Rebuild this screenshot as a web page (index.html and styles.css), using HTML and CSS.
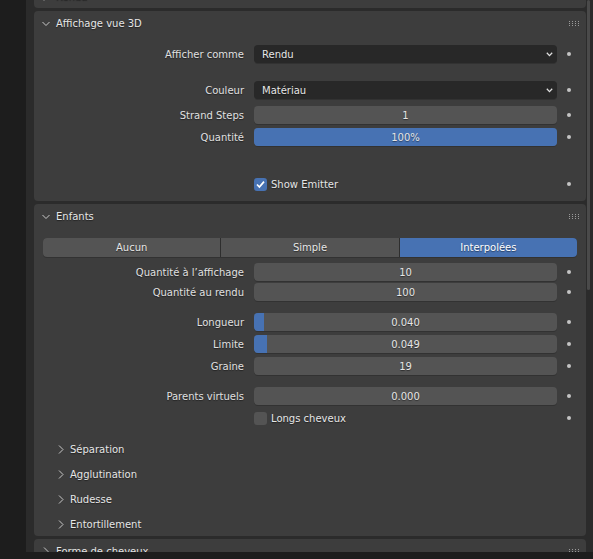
FILE: index.html
```html
<!DOCTYPE html>
<html lang="fr">

<head>
  <meta charset="UTF-8">
  <meta name="viewport" content="width=device-width, initial-scale=1.0">
  <title>Particules</title>
  <link rel="stylesheet" href="styles.css">
</head>

<body>
  <div class="editor">
    <div class="nav-bar"></div>
    <div class="region">
      <div class="stack">

        <!-- panneau replie -->
        <div class="panel">
          <div class="panel-head">
            <span class="arrow"><svg width="6" height="9" viewBox="0 0 6 9"><path d="M1 0.5 L5 4.5 L1 8.5" fill="none" stroke="#c8c8c8" stroke-width="1"/></svg></span>
            <span>Rendu</span>
          </div>
        </div>

        <!-- affichage vue 3D -->
        <div class="panel">
          <div class="panel-head">
            <span class="arrow"><svg width="8" height="6" viewBox="0 0 8 6"><path d="M0.5 1 L4 4.5 L7.5 1" fill="none" stroke="#c8c8c8" stroke-width="1"/></svg></span>
            <span>Affichage vue 3D</span>
            <span class="grip"><svg width="10" height="5" viewBox="0 0 10 5"><g fill="#9a9a9a"><rect x="0" y="0" width="1" height="1"/><rect x="0" y="2" width="1" height="1"/><rect x="0" y="4" width="1" height="1"/><rect x="3" y="0" width="1" height="1"/><rect x="3" y="2" width="1" height="1"/><rect x="3" y="4" width="1" height="1"/><rect x="6" y="0" width="1" height="1"/><rect x="6" y="2" width="1" height="1"/><rect x="6" y="4" width="1" height="1"/><rect x="9" y="0" width="1" height="1"/><rect x="9" y="2" width="1" height="1"/><rect x="9" y="4" width="1" height="1"/></g></svg></span>
          </div>
          <div class="panel-body">
            <div class="row">
              <span class="label">Afficher comme</span>
              <div class="field menu"><span>Rendu</span><svg width="7" height="5" viewBox="0 0 7 5"><path d="M0.8 0.8 L3.5 3.6 L6.2 0.8" fill="none" stroke="#e0e0e0" stroke-width="1.3"/></svg></div>
              <span class="dot"></span>
            </div>
            <div class="row after-sep">
              <span class="label">Couleur</span>
              <div class="field menu"><span>Matériau</span><svg width="7" height="5" viewBox="0 0 7 5"><path d="M0.8 0.8 L3.5 3.6 L6.2 0.8" fill="none" stroke="#e0e0e0" stroke-width="1.3"/></svg></div>
              <span class="dot"></span>
            </div>
            <div class="row after-menu">
              <span class="label">Strand Steps</span>
              <div class="field"><span class="value">1</span></div>
              <span class="dot"></span>
            </div>
            <div class="row">
              <span class="label">Quantité</span>
              <div class="field"><div class="fill" style="width: 100%"></div><span class="value">100%</span></div>
              <span class="dot"></span>
            </div>
            <div class="row far">
              <span class="label"></span>
              <label class="check"><span class="box on"><svg width="13" height="13" viewBox="0 0 13 13"><path d="M3 6.5 L5.4 9 L10 3.6" fill="none" stroke="#fff" stroke-width="1.7"/></svg></span>Show Emitter</label>
              <span class="dot"></span>
            </div>
          </div>
        </div>

        <!-- enfants -->
        <div class="panel">
          <div class="panel-head">
            <span class="arrow"><svg width="8" height="6" viewBox="0 0 8 6"><path d="M0.5 1 L4 4.5 L7.5 1" fill="none" stroke="#c8c8c8" stroke-width="1"/></svg></span>
            <span>Enfants</span>
            <span class="grip"><svg width="10" height="5" viewBox="0 0 10 5"><g fill="#9a9a9a"><rect x="0" y="0" width="1" height="1"/><rect x="0" y="2" width="1" height="1"/><rect x="0" y="4" width="1" height="1"/><rect x="3" y="0" width="1" height="1"/><rect x="3" y="2" width="1" height="1"/><rect x="3" y="4" width="1" height="1"/><rect x="6" y="0" width="1" height="1"/><rect x="6" y="2" width="1" height="1"/><rect x="6" y="4" width="1" height="1"/><rect x="9" y="0" width="1" height="1"/><rect x="9" y="2" width="1" height="1"/><rect x="9" y="4" width="1" height="1"/></g></svg></span>
          </div>
          <div class="panel-body bottomless">
            <div class="tabs">
              <span class="tab">Aucun</span>
              <span class="tab">Simple</span>
              <span class="tab active">Interpolées</span>
            </div>
            <div class="row after-tabs">
              <span class="label">Quantité à l’affichage</span>
              <div class="field"><span class="value">10</span></div>
              <span class="dot"></span>
            </div>
            <div class="row tight">
              <span class="label">Quantité au rendu</span>
              <div class="field"><span class="value">100</span></div>
              <span class="dot"></span>
            </div>
            <div class="row spaced">
              <span class="label">Longueur</span>
              <div class="field"><div class="fill" style="width: 3.3%"></div><span class="value">0.040</span></div>
              <span class="dot"></span>
            </div>
            <div class="row">
              <span class="label">Limite</span>
              <div class="field"><div class="fill" style="width: 4.3%"></div><span class="value">0.049</span></div>
              <span class="dot"></span>
            </div>
            <div class="row">
              <span class="label">Graine</span>
              <div class="field"><span class="value">19</span></div>
              <span class="dot"></span>
            </div>
            <div class="row spaced">
              <span class="label">Parents virtuels</span>
              <div class="field"><span class="value">0.000</span></div>
              <span class="dot"></span>
            </div>
            <div class="row">
              <span class="label"></span>
              <label class="check"><span class="box"></span>Longs cheveux</label>
              <span class="dot"></span>
            </div>

            <div class="subpanels">
              <div class="sub"><span class="arrow-sm"><svg width="6" height="9" viewBox="0 0 6 9"><path d="M1 0.5 L5 4.5 L1 8.5" fill="none" stroke="#c8c8c8" stroke-width="1"/></svg></span>Séparation</div>
              <div class="sub"><span class="arrow-sm"><svg width="6" height="9" viewBox="0 0 6 9"><path d="M1 0.5 L5 4.5 L1 8.5" fill="none" stroke="#c8c8c8" stroke-width="1"/></svg></span>Agglutination</div>
              <div class="sub"><span class="arrow-sm"><svg width="6" height="9" viewBox="0 0 6 9"><path d="M1 0.5 L5 4.5 L1 8.5" fill="none" stroke="#c8c8c8" stroke-width="1"/></svg></span>Rudesse</div>
              <div class="sub"><span class="arrow-sm"><svg width="6" height="9" viewBox="0 0 6 9"><path d="M1 0.5 L5 4.5 L1 8.5" fill="none" stroke="#c8c8c8" stroke-width="1"/></svg></span>Entortillement</div>
            </div>
          </div>
        </div>

        <!-- panneau replie -->
        <div class="panel">
          <div class="panel-head">
            <span class="arrow"><svg width="6" height="9" viewBox="0 0 6 9"><path d="M1 0.5 L5 4.5 L1 8.5" fill="none" stroke="#c8c8c8" stroke-width="1"/></svg></span>
            <span>Forme de cheveux</span>
            <span class="grip"><svg width="10" height="5" viewBox="0 0 10 5"><g fill="#9a9a9a"><rect x="0" y="0" width="1" height="1"/><rect x="0" y="2" width="1" height="1"/><rect x="0" y="4" width="1" height="1"/><rect x="3" y="0" width="1" height="1"/><rect x="3" y="2" width="1" height="1"/><rect x="3" y="4" width="1" height="1"/><rect x="6" y="0" width="1" height="1"/><rect x="6" y="2" width="1" height="1"/><rect x="6" y="4" width="1" height="1"/><rect x="9" y="0" width="1" height="1"/><rect x="9" y="2" width="1" height="1"/><rect x="9" y="4" width="1" height="1"/></g></svg></span>
          </div>
        </div>

      </div>
      <div class="scroll"></div>
    </div>
  </div>
  <div class="footer"></div>
</body>

</html>
```

FILE: styles.css
```css
* {
  margin: 0;
  padding: 0;
  box-sizing: border-box;
}

body {
  width: 593px;
  height: 559px;
  overflow: hidden;
  background-color: #1d1d1d;
  font-family: "DejaVu Sans", sans-serif;
  font-size: 10px;
  color: #e0e0e0;
  text-shadow: 0 1px 1px rgba(0, 0, 0, 0.45);
}

.editor {
  display: flex;
  height: 552px;
}

.nav-bar {
  width: 26px;
  background-color: #1d1d1d;
}

.region {
  flex: 1;
  position: relative;
  overflow: hidden;
  background-color: #2b2b2b;
  padding: 0 7px 0 8px;
}

/* contenu defile : le premier panneau est en partie cache */
.stack {
  display: flex;
  flex-direction: column;
  gap: 3px;
  margin-top: -16px;
}

.panel {
  background-color: #3d3d3d;
  border-radius: 4px;
}

.panel-head {
  display: flex;
  align-items: center;
  height: 24px;
  padding: 1px 7px 0 8px;
  color: #e6e6e6;
}

.arrow {
  display: flex;
  align-items: center;
  justify-content: center;
  width: 8px;
  margin-right: 6px;
}

.arrow svg,
.arrow-sm svg,
.grip svg {
  display: block;
}

.grip {
  margin-left: auto;
}

.panel-body {
  padding: 10px 0 8px 9px;
}

.panel-body.bottomless {
  padding-bottom: 0;
}

.row {
  display: grid;
  grid-template-columns: 211px 303px 1fr;
  align-items: center;
  height: 18px;
  margin-top: 4px;
}

.row.after-sep {
  margin-top: 18px;
}

.row.after-menu {
  margin-top: 7px;
}

.row.far {
  margin-top: 29px;
}

.row.after-tabs {
  margin-top: 6px;
}

.row.tight {
  margin-top: 2px;
}

.row.spaced {
  margin-top: 12px;
}

.panel-body > .row:first-child {
  margin-top: 0;
}

.label {
  text-align: right;
  padding-right: 10px;
  white-space: nowrap;
}

.field {
  position: relative;
  overflow: hidden;
  display: flex;
  align-items: center;
  justify-content: center;
  height: 18px;
  border-radius: 4px;
  background-color: #545454;
  color: #e6e6e6;
  box-shadow: 0 1px 0 rgba(0, 0, 0, 0.18);
}

.field.menu {
  justify-content: space-between;
  padding: 0 4px 0 8px;
  background-color: #282828;
}

.fill {
  position: absolute;
  left: 0;
  top: 0;
  bottom: 0;
  background-color: #4772b3;
}

.value {
  position: relative;
}

.dot {
  width: 4px;
  height: 4px;
  margin-left: 10px;
  border-radius: 50%;
  background-color: #c4c4c4;
}

.check {
  display: flex;
  align-items: center;
  color: #e6e6e6;
}

.check .box {
  width: 13px;
  height: 13px;
  margin-right: 4px;
  border-radius: 3px;
  background-color: #545454;
}

.check .box.on {
  background-color: #4772b3;
}

.check .box svg {
  display: block;
}

.tabs {
  display: flex;
  gap: 1px;
  width: 534px;
  height: 19px;
  border-radius: 4px;
  overflow: hidden;
  background-color: #2e2e2e;
  box-shadow: 0 1px 0 rgba(0, 0, 0, 0.18);
}

.tab {
  flex: 1;
  display: flex;
  align-items: center;
  justify-content: center;
  background-color: #545454;
  color: #e6e6e6;
}

.tab.active {
  background-color: #4772b3;
  color: #fff;
}

.subpanels {
  margin-top: 9px;
}

.sub {
  display: flex;
  align-items: center;
  height: 25px;
  padding: 1px 0 0 15px;
  color: #e6e6e6;
}

.arrow-sm {
  width: 6px;
  margin-right: 6px;
}

.scroll {
  position: absolute;
  top: 0;
  right: 3px;
  width: 3px;
  height: 290px;
  border-radius: 2px;
  background-color: #4a4a4a;
}

.footer {
  height: 7px;
  background-color: #1d1d1d;
}
```
